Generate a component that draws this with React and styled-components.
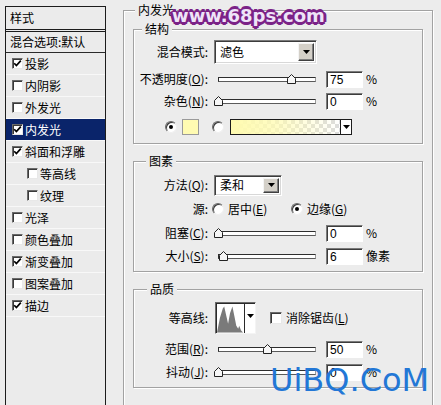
import React from "react";
import styled, { createGlobalStyle } from "styled-components";

const effects = [
  { label: "投影", checked: true },
  { label: "内阴影" },
  { label: "外发光" },
  { label: "内发光", checked: true, selected: true },
  { label: "斜面和浮雕", checked: true },
  { label: "等高线", indent: true },
  { label: "纹理", indent: true },
  { label: "光泽" },
  { label: "颜色叠加" },
  { label: "渐变叠加", checked: true },
  { label: "图案叠加" },
  { label: "描边", checked: true },
];

function CheckBox({ checked }) {
  return (
    <CheckFrame>
      {checked && (
        <svg width="9" height="9" viewBox="0 0 9 9">
          <path d="M1.2 4.2 L3.4 6.6 L7.8 1.6" fill="none" stroke="#000" strokeWidth="1.7" />
        </svg>
      )}
    </CheckFrame>
  );
}

function Radio({ checked }) {
  return <RadioDot $checked={checked} />;
}

function Arrow() {
  return (
    <svg width="7" height="4" viewBox="0 0 7 4">
      <path d="M0 0 H7 L3.5 4 Z" fill="#000" />
    </svg>
  );
}

function Slider({ pos }) {
  return (
    <SliderBox>
      <Track />
      <Thumb style={{ left: `${4 + pos * 98 - 4.5}px` }}>
        <svg width="9" height="10" viewBox="0 0 9 10">
          <path d="M0.5 9.5 V4.5 L4.5 0.5 L8.5 4.5 V9.5 Z" fill="#f6f6f6" stroke="#222" />
        </svg>
      </Thumb>
    </SliderBox>
  );
}

function Select({ value, w, h }) {
  return (
    <SelectBox $w={w} $h={h}>
      <SelectValue>{value}</SelectValue>
      <DropButton>
        <Arrow />
      </DropButton>
    </SelectBox>
  );
}

function SliderRow({ label, pos, value, unit, gap }) {
  return (
    <Row $gap={gap}>
      <Label>{label}</Label>
      <Slider pos={pos} />
      <NumberField>{value}</NumberField>
      <Unit>{unit}</Unit>
    </Row>
  );
}

export default function App() {
  return (
    <>
      <GlobalStyle />
      <Window>
        <StylePanel>
          <PanelTitle>样式</PanelTitle>
          <BlendRow>混合选项:默认</BlendRow>
          {effects.map((e) => (
            <EffectRow key={e.label} $selected={e.selected} $indent={e.indent}>
              <CheckBox checked={e.checked} />
              <span>{e.label}</span>
            </EffectRow>
          ))}
        </StylePanel>

        <OuterGroup>
          <Legend $x={11}>内发光</Legend>

          <Group $h={115}>
            <Legend $x={8}>结构</Legend>
            <Row $h={24} $gap={10}>
              <Label>混合模式:</Label>
              <Select value="滤色" w={103} h={24} />
            </Row>
            <SliderRow
              gap={4}
              label={<>不透明度(<Key>O</Key>):</>}
              pos={0.75}
              value="75"
              unit="%"
            />
            <SliderRow gap={0} label={<>杂色(<Key>N</Key>):</>} pos={0} value="0" unit="%" />
            <ColorRow>
              <Radio checked />
              <Swatch />
              <Radio />
              <GradientField>
                <GradientFill />
                <GradientArrow>
                  <Arrow />
                </GradientArrow>
              </GradientField>
            </ColorRow>
          </Group>

          <Group $h={111}>
            <Legend $x={12}>图素</Legend>
            <Row $gap={12}>
              <Label>方法(<Key>Q</Key>):</Label>
              <Select value="柔和" w={68} h={21} />
            </Row>
            <Row $gap={2}>
              <Label>源:</Label>
              <RadioOption $w={79}>
                <Radio />
                <span>居中(<Key>E</Key>)</span>
              </RadioOption>
              <RadioOption>
                <Radio checked />
                <span>边缘(<Key>G</Key>)</span>
              </RadioOption>
            </Row>
            <SliderRow gap={2} label={<>阻塞(<Key>C</Key>):</>} pos={0} value="0" unit="%" />
            <SliderRow gap={1} label={<>大小(<Key>S</Key>):</>} pos={0.06} value="6" unit="像素" />
          </Group>

          <Group $h={99}>
            <Legend $x={13}>品质</Legend>
            <Row $h={32} $gap={12}>
              <Label>等高线:</Label>
              <ContourPicker>
                <ContourGraph>
                  <svg width="28" height="29" viewBox="0 0 28 29">
                    <path
                      d="M0 29 L3 14 L6 4 L7.5 2 L9.5 11 L11.5 20 L13.5 9 L16 2 L18 12 L20 22 L22 25 L23 22 L25 27 L27 29 Z"
                      fill="#7a7a7a"
                    />
                  </svg>
                </ContourGraph>
                <ContourArrow>
                  <Arrow />
                </ContourArrow>
              </ContourPicker>
              <AntiAlias>
                <CheckBox />
                <span>消除锯齿(<Key>L</Key>)</span>
              </AntiAlias>
            </Row>
            <SliderRow gap={4} label={<>范围(<Key>R</Key>):</>} pos={0.5} value="50" unit="%" />
            <SliderRow gap={1} label={<>抖动(<Key>J</Key>):</>} pos={0} value="0" unit="%" />
          </Group>
        </OuterGroup>

        <SiteMark>www.68ps.com</SiteMark>
        <CornerMark>UiBQ.CoM</CornerMark>
      </Window>
    </>
  );
}

const GlobalStyle = createGlobalStyle`
  * { box-sizing: border-box; }
  html, body { margin: 0; padding: 0; background: #ececec; }
  body {
    font-family: "Noto Sans CJK SC", "DejaVu Sans", sans-serif;
    font-size: 12px;
    line-height: 14px;
    color: #000;
    overflow: hidden;
  }
`;

const Window = styled.div`
  position: relative;
  width: 441px;
  height: 405px;
  overflow: hidden;
  display: flex;
  align-items: flex-start;
  background: #ececec;
`;

const StylePanel = styled.div`
  margin: 6px 0 0 5px;
  width: 101px;
  height: 420px;
  flex-shrink: 0;
  border: 1px solid #1c1c1c;
  background: #ebebeb;
`;

const PanelTitle = styled.div`
  height: 25px;
  padding: 4px 0 0 4px;
  border-bottom: 3px double #1c1c1c;
`;

const BlendRow = styled.div`
  height: 21px;
  padding: 3px 0 0 4px;
  border-bottom: 1px solid #2a2a2a;
`;

const EffectRow = styled.div`
  height: 22px;
  display: flex;
  align-items: center;
  gap: 2px;
  padding-left: ${(p) => (p.$indent ? 21 : 6)}px;
  border-bottom: 1px solid #f8f8f8;
  background: ${(p) => (p.$selected ? "#0a246a" : "transparent")};
  color: ${(p) => (p.$selected ? "#fff" : "#000")};
`;

const CheckFrame = styled.span`
  width: 11px;
  height: 11px;
  flex-shrink: 0;
  display: flex;
  align-items: center;
  justify-content: center;
  background: #fff;
  border: 1px solid;
  border-color: #6a6a6a #e8e8e8 #e8e8e8 #6a6a6a;
  box-shadow: inset 1px 1px 0 #3a3a3a;
`;

const OuterGroup = styled.div`
  position: relative;
  margin: 10px 0 0 17px;
  width: 310px;
  height: 420px;
  flex-shrink: 0;
  border: 1px solid #a2a2a2;
  box-shadow: inset 1px 1px 0 #fff, 1px 1px 0 #fff;
  padding: 18px 0 0 9px;
  display: flex;
  flex-direction: column;
  gap: 18px;
`;

const Group = styled.div`
  position: relative;
  width: 290px;
  height: ${(p) => p.$h}px;
  flex-shrink: 0;
  border: 1px solid #a2a2a2;
  box-shadow: inset 1px 1px 0 #fff, 1px 1px 0 #fff;
  display: flex;
  flex-direction: column;

  & + & {
    margin-top: -1px;
  }
`;

const Legend = styled.span`
  position: absolute;
  top: -8px;
  left: ${(p) => p.$x}px;
  padding: 0 3px;
  background: #ececec;
  line-height: 14px;
`;

const Row = styled.div`
  display: flex;
  align-items: center;
  height: ${(p) => p.$h || 22}px;
  margin-top: ${(p) => p.$gap || 0}px;
  flex-shrink: 0;
`;

const Label = styled.span`
  width: 74px;
  flex-shrink: 0;
  text-align: right;
  white-space: nowrap;
`;

const Key = styled.span`
  text-decoration: underline;
`;

const SelectBox = styled.div`
  margin-left: 6px;
  width: ${(p) => p.$w}px;
  height: ${(p) => p.$h}px;
  display: flex;
  align-items: stretch;
  background: #fff;
  border: 1px solid;
  border-color: #7a7a7a #fff #fff #7a7a7a;
  box-shadow: inset 1px 1px 0 #3c3c3c, inset -1px -1px 0 #d8d8d8;
  padding: 2px;
`;

const SelectValue = styled.span`
  flex: 1;
  display: flex;
  align-items: center;
  padding-left: 3px;
`;

const DropButton = styled.span`
  width: 16px;
  display: flex;
  align-items: center;
  justify-content: center;
  background: #d4d0c8;
  border: 1px solid;
  border-color: #f4f4f4 #404040 #404040 #f4f4f4;
  box-shadow: inset -1px -1px 0 #808080;
`;

const SliderBox = styled.div`
  position: relative;
  margin-left: 6px;
  width: 104px;
  height: 22px;
  flex-shrink: 0;
`;

const Track = styled.div`
  position: absolute;
  left: 4px;
  right: 2px;
  top: 9px;
  height: 5px;
  background: #fff;
  border: 1px solid #2e2e2e;
  border-right-color: #9a9a9a;
  border-bottom-color: #5a5a5a;
`;

const Thumb = styled.div`
  position: absolute;
  top: 6px;
  width: 9px;
  height: 10px;
  display: flex;
`;

const NumberField = styled.div`
  margin-left: 8px;
  width: 37px;
  height: 17px;
  flex-shrink: 0;
  padding: 1px 0 0 3px;
  background: #fff;
  border: 1px solid;
  border-color: #7a7a7a #fff #fff #7a7a7a;
  box-shadow: inset 1px 1px 0 #3c3c3c;
  font-family: "Liberation Sans", "Noto Sans", sans-serif;
  font-size: 12px;
  line-height: 14px;
`;

const Unit = styled.span`
  margin-left: 3px;
  white-space: nowrap;
`;

const ColorRow = styled.div`
  display: flex;
  align-items: center;
  height: 22px;
  margin-top: 4px;
  padding-left: 31px;
`;

const RadioDot = styled.span`
  position: relative;
  width: 12px;
  height: 12px;
  flex-shrink: 0;
  border-radius: 50%;
  background: #fff;
  border: 1px solid;
  border-color: #6a6a6a #f0f0f0 #f0f0f0 #6a6a6a;
  box-shadow: inset 1px 1px 0 #3a3a3a;

  &::after {
    content: "";
    display: ${(p) => (p.$checked ? "block" : "none")};
    position: absolute;
    left: 3px;
    top: 3px;
    width: 4px;
    height: 4px;
    border-radius: 50%;
    background: #000;
  }

  & + & {
    margin-left: 13px;
  }
`;

const Swatch = styled.span`
  margin: 0 13px 0 5px;
  width: 17px;
  height: 16px;
  flex-shrink: 0;
  background: #fffbb2;
  border: 1px solid #9a9a9a;
`;

const GradientField = styled.div`
  margin-left: 6px;
  width: 122px;
  height: 16px;
  display: flex;
  border: 1px solid #1c1c1c;
  background-color: #fff;
  background-image: linear-gradient(45deg, #dcdcdc 25%, transparent 25%, transparent 75%, #dcdcdc 75%),
    linear-gradient(45deg, #dcdcdc 25%, transparent 25%, transparent 75%, #dcdcdc 75%);
  background-size: 8px 8px;
  background-position: 0 0, 4px 4px;
`;

const GradientFill = styled.span`
  flex: 1;
  background: linear-gradient(to right, #fffbb0 0%, rgba(255, 251, 176, 0.75) 40%, rgba(255, 251, 176, 0) 100%);
`;

const GradientArrow = styled.span`
  width: 11px;
  display: flex;
  align-items: center;
  justify-content: center;
  background: #fff;
  border-left: 1px solid #1c1c1c;
`;

const RadioOption = styled.span`
  display: flex;
  align-items: center;
  gap: 4px;
  width: ${(p) => (p.$w ? `${p.$w}px` : "auto")};
  margin-left: ${(p) => (p.$w ? 4 : 0)}px;
  white-space: nowrap;
`;

const ContourPicker = styled.div`
  margin-left: 7px;
  width: 41px;
  height: 32px;
  display: flex;
  background: #fff;
  border: 1px solid;
  border-color: #6a6a6a #f4f4f4 #f4f4f4 #6a6a6a;
  box-shadow: inset 1px 1px 0 #2a2a2a;
  padding: 1px 0 0 1px;
`;

const ContourGraph = styled.span`
  width: 28px;
  display: flex;
  align-items: flex-end;
  border-right: 1px solid #2a2a2a;
`;

const ContourArrow = styled.span`
  flex: 1;
  display: flex;
  align-items: center;
  justify-content: center;
  padding-bottom: 6px;
`;

const AntiAlias = styled.span`
  display: flex;
  align-items: center;
  gap: 4px;
  margin-left: 14px;
  white-space: nowrap;

  & > span:first-child {
    width: 12px;
    height: 12px;
  }
`;

const SiteMark = styled.div`
  position: absolute;
  left: 172px;
  top: 5px;
  font-family: "DejaVu Sans", sans-serif;
  font-weight: bold;
  font-size: 18px;
  line-height: 22px;
  color: #eee4f8;
  text-shadow: 2px 0 0 #7b2287, -2px 0 0 #7b2287, 0 2px 0 #7b2287, 0 -2px 0 #7b2287,
    1.5px 1.5px 0 #7b2287, -1.5px 1.5px 0 #7b2287, 1.5px -1.5px 0 #7b2287, -1.5px -1.5px 0 #7b2287,
    3px 0 0 #7b2287, -3px 0 0 #7b2287, 0 3px 0 #7b2287, 0 -3px 0 #7b2287;
  white-space: nowrap;
`;

const CornerMark = styled.div`
  position: absolute;
  left: 270px;
  top: 362px;
  font-family: "DejaVu Sans", sans-serif;
  font-size: 32px;
  line-height: 36px;
  color: #2277d6;
  white-space: nowrap;
`;
